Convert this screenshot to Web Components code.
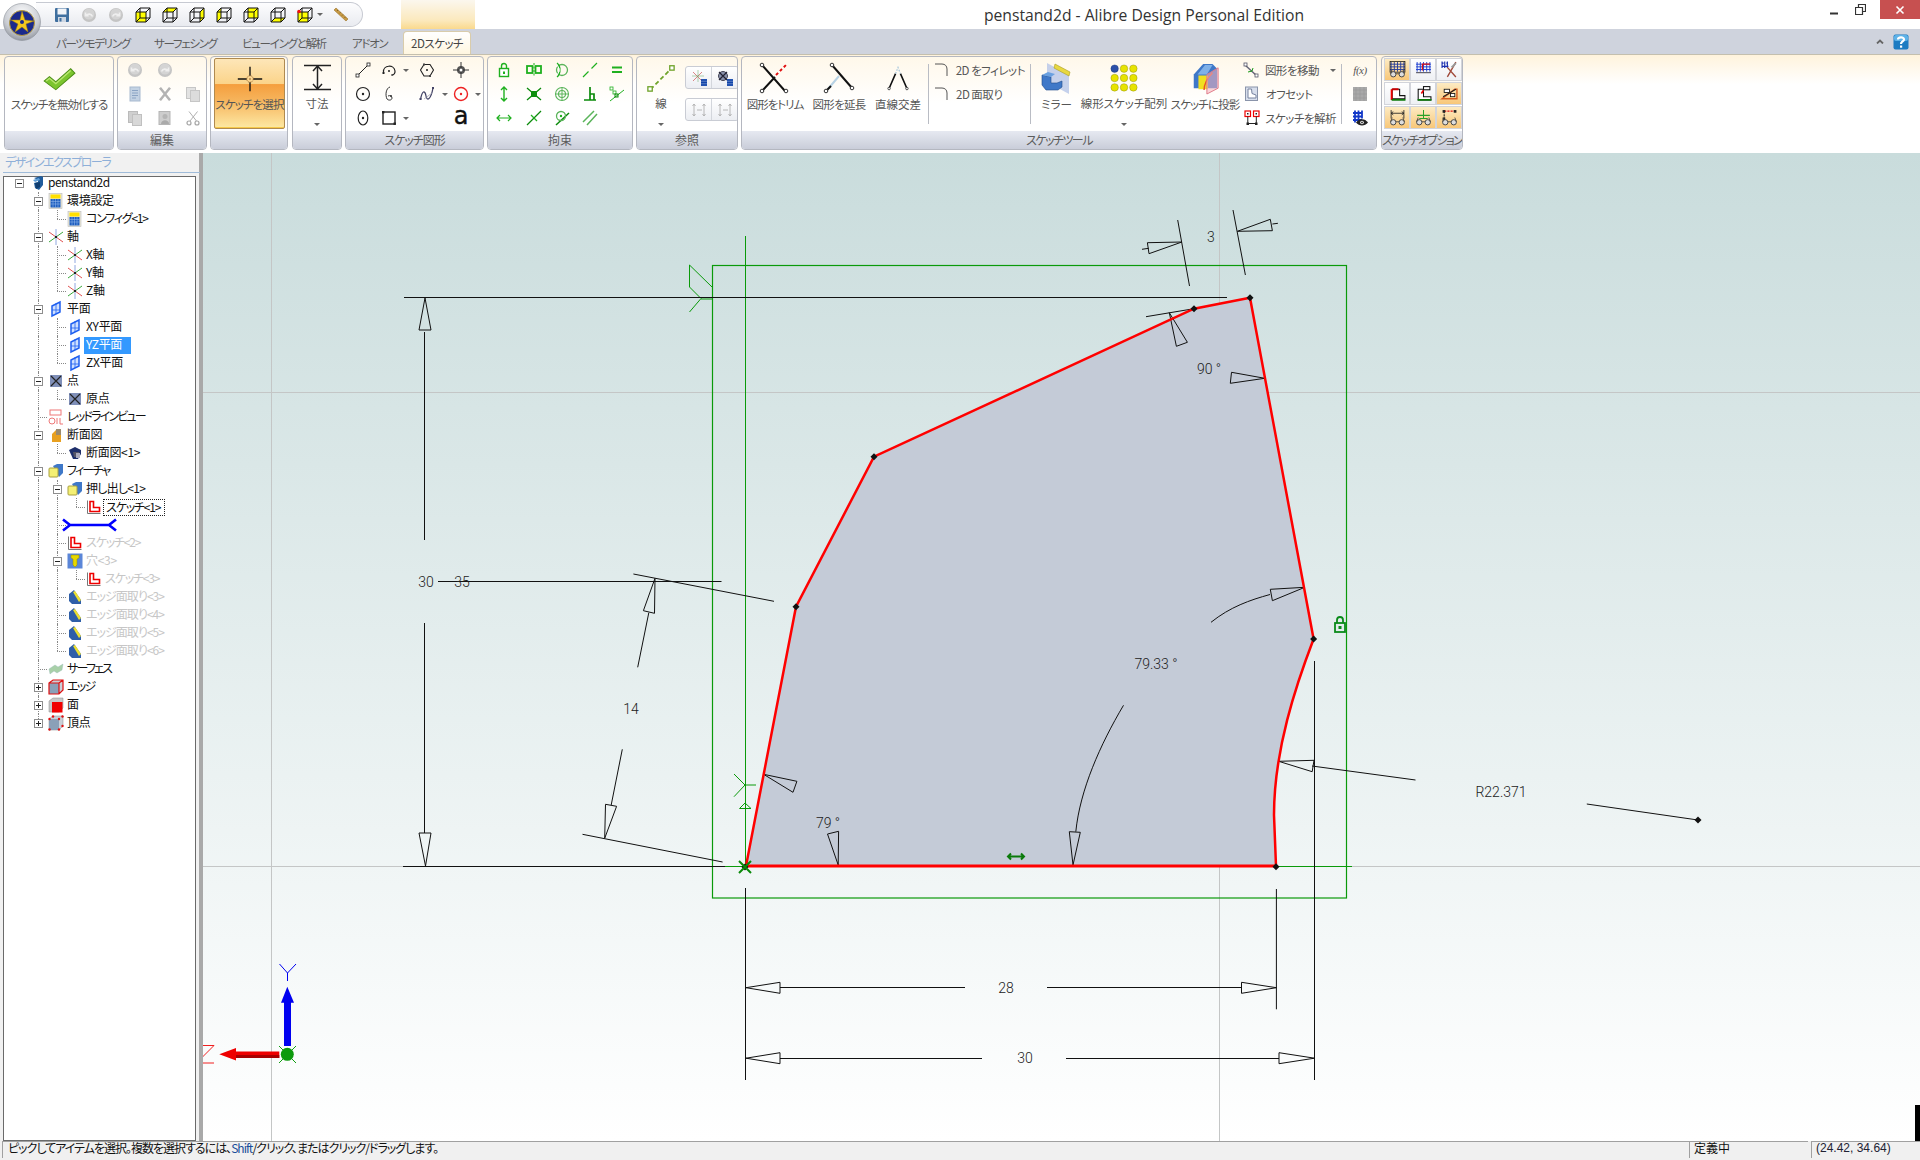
<!DOCTYPE html>
<html lang="ja"><head><meta charset="utf-8"><title>penstand2d</title>
<style>html,body{margin:0;padding:0;background:#fff;overflow:hidden}</style></head>
<body>
<cad-app></cad-app>
<script>
const FONT='"Noto Sans CJK JP","Noto Sans",sans-serif';
const g='#1fb01f', dg='#0a8a0a';
const disc=(d)=>`<circle cx="8" cy="8" r="7" fill="#c4c4c4"/><circle cx="8" cy="7" r="5.5" fill="#d4d4d4"/><path d="${d}" fill="none" stroke="#eee" stroke-width="1.6"/>`;
const cube=(f,dot)=>{const F={front:'M1 5h10v10H1z',top:'M1 5l4-4h10l-4 4z',right:'M11 5l4-4v10l-4 4z',back:'M5 1h10v10H5z',bottom:'M1 15l4-4h10l-4 4z',left:'M1 5l4-4v10l-4 4z'}[f];
 return `<path d="${F}" fill="#ffff00"/><path d="M1 5h10v10H1zM5 1h10v10H5zM1 5l4-4M11 5l4-4M1 15l4-4M11 15l4-4" fill="none" stroke="#111" stroke-width="1"/>${dot?'<circle cx="2" cy="4.500" r="1.800" fill="#e11"/>':''}`};
const sk=`<path d="M1.500 1.500v13h13" fill="none" stroke="#777" stroke-width="1"/><path d="M4 2.500h3.500v6h6v4H4z" fill="#fff" stroke="#e00" stroke-width="1.600"/>`;
const ICONS={
 save:`<rect x="1" y="1" width="14" height="14" rx="1" fill="#3f6f9f"/><rect x="3.500" y="1.500" width="9" height="6" fill="#f2f4f8"/><rect x="4" y="10" width="8" height="5" fill="#cdd6e2"/><rect x="5.500" y="11" width="2" height="3.500" fill="#3f6f9f"/>`,
 undo:disc('M11.500 9.500C10 6.500 7 6.500 4.800 8.500M4.500 5.500v3.300h3.200'),
 redo:disc('M4.500 9.500C6 6.500 9 6.500 11.200 8.500M11.500 5.500v3.300h-3.200'),
 c1:cube('front'),c2:cube('top'),c3:cube('right'),c4:cube('left'),c5:cube('back'),c6:cube('bottom'),c7:cube('front',1),
 ruler:`<path d="M1 3l2-2 12 11-2 2z" fill="#c79a45" stroke="#9b7226" stroke-width=".6"/><path d="M4 4l1-1M6.500 6.300l1-1M9 8.600l1-1M11.500 10.900l1-1" stroke="#6b4d15" stroke-width=".7"/>`,
 check:`<path d="M2 16l5-5 6 6L27 2l4 5-18 19z" fill="#7cc52e" stroke="#4d8f17" stroke-width="1"/><path d="M4 16l3-3 6 6L27 4" fill="none" stroke="#b9e66f" stroke-width="1.300"/>`,
 doc:`<rect x="3" y="1" width="10" height="14" fill="#c3d2e3" stroke="#a7b9cf"/><path d="M5 4.500h6M5 7h6M5 9.500h6M5 12h4" stroke="#8ba4c4"/>`,
 del:`<path d="M2 2.500l2-1.500 4 5 4-5 2 1.500-4.500 5.500 4.500 5.500-2 1.500-4-5-4 5-2-1.500 4.500-5.500z" fill="#b3b3b3"/>`,
 copy:`<rect x="1.500" y="1.500" width="9" height="11" fill="#e2e2e2" stroke="#c6c6c6"/><rect x="5.500" y="4.500" width="9" height="11" fill="#dcdcdc" stroke="#c6c6c6"/>`,
 copy2:`<rect x="1.500" y="1.500" width="9" height="11" fill="#cfcfcf" stroke="#bbb"/><rect x="5.500" y="4.500" width="9" height="11" fill="#d8d8d8" stroke="#c0c0c0"/>`,
 paste:`<rect x="2" y="1.500" width="11" height="13" fill="#cdcdcd" stroke="#b5b5b5"/><circle cx="8" cy="6.500" r="2.500" fill="#b5b5b5"/><path d="M4 14c0-5 8-5 8 0z" fill="#aaa"/>`,
 cut:`<path d="M12.500 1.500L5 11M4 1.500l7.500 9.500" stroke="#b0b0b0" fill="none"/><circle cx="4" cy="13" r="2" fill="none" stroke="#a5a5a5" stroke-width="1.200"/><circle cx="12" cy="13" r="2" fill="none" stroke="#a5a5a5" stroke-width="1.200"/>`,
 cross:`<path d="M16 1v11M16 20v11M1 16h11M20 16h11" stroke="#111" stroke-width="1.700" fill="none"/><circle cx="16" cy="16" r="4" fill="none" stroke="#8a5018" stroke-width="1" stroke-dasharray="1.500 1"/><circle cx="16" cy="16" r="1" fill="#8a5018"/>`,
 dim:`<path d="M1 1.500h27M1 25.500h27M14.500 2v23M10 7l4.500-5 4.500 5M10 20l4.500 5 4.500-5" fill="none" stroke="#222" stroke-width="1.500"/>`,
 line:`<path d="M3 13L13 3" stroke="#222"/><rect x="1" y="12" width="3" height="3" fill="#fff" stroke="#222" stroke-width=".8"/><rect x="12" y="1" width="3" height="3" fill="#fff" stroke="#222" stroke-width=".8"/>`,
 arc:`<path d="M2.500 10C2 3 13 2 14 9c.2 2-1 4-3 4" fill="none" stroke="#222" stroke-width="1.200"/><circle cx="8" cy="9" r="1" fill="#222"/><rect x="1.500" y="10" width="2" height="2" fill="#222"/><path d="M10 13h2" stroke="#222"/>`,
 poly:`<path d="M5 2.500h6l3.500 5.500L11 14H5L1.500 8z" fill="none" stroke="#222" stroke-width="1.100"/><circle cx="8" cy="8" r="1" fill="#222"/><rect x="4" y="1.500" width="2" height="2" fill="#444"/><rect x="10" y="13" width="2" height="2" fill="#444"/>`,
 point:`<circle cx="8" cy="8" r="4" fill="#555"/><path d="M8 0v16M0 8h16" stroke="#333"/><circle cx="8" cy="8" r="1.500" fill="#fff"/>`,
 circle:`<circle cx="8" cy="8" r="6.500" fill="none" stroke="#222" stroke-width="1.200"/><circle cx="8" cy="8" r="1.200" fill="#222"/>`,
 spiral:`<path d="M9 1C5 2 4 9 6 13c2 2 5 1 5-1s-2-3-4-2" fill="none" stroke="#333"/><circle cx="10" cy="10" r="1" fill="#333"/>`,
 spline:`<path d="M1.500 14C3 4 6 4 7 10s5 3 7-8" fill="none" stroke="#446" stroke-width="1.300"/><rect x="0.500" y="12" width="2" height="2" fill="#446"/><rect x="13" y="1" width="2" height="2" fill="#446"/><path d="M5 13l8-6" stroke="#99a" stroke-width=".7"/>`,
 rcircle:`<circle cx="8" cy="8" r="6.500" fill="none" stroke="#e22" stroke-width="1.400"/><circle cx="8" cy="8" r="1.200" fill="#e22"/>`,
 ellipse:`<ellipse cx="8" cy="8" rx="4.800" ry="7" fill="none" stroke="#222" stroke-width="1.200"/><circle cx="8" cy="8" r="1.200" fill="#222"/>`,
 rect:`<rect x="2" y="2" width="12" height="12" fill="none" stroke="#222" stroke-width="1.400"/><rect x="1" y="1" width="2.400" height="2.400" fill="#222"/><rect x="12.500" y="12.500" width="2.400" height="2.400" fill="#222"/>`,
 lock:`<rect x="3.500" y="6.500" width="9" height="8" fill="#fff" stroke="${g}" stroke-width="1.400"/><path d="M5.500 6.500V4a2.500 2.500 0 0 1 5 0v2.500" fill="none" stroke="${g}" stroke-width="1.400"/><rect x="7" y="9.500" width="2" height="2.500" fill="${g}"/>`,
 sym:`<rect x="1" y="4" width="5.500" height="7" fill="none" stroke="${g}" stroke-width="1.800"/><rect x="9.500" y="4" width="5.500" height="7" fill="none" stroke="${g}" stroke-width="1.800"/><path d="M8 1v13" stroke="${g}" stroke-dasharray="2 1.500"/>`,
 tan:`<circle cx="8" cy="8" r="5.500" fill="none" stroke="#5ab45a" stroke-width="1.300"/><path d="M3 1c4 3 4 11 0 14" fill="none" stroke="${g}" stroke-width="1.300"/><path d="M3 3l3 5-3 5" fill="none" stroke="#fff" stroke-width=".8"/>`,
 col:`<path d="M1 15l5.500-5.500M9.500 6.500L15 1" stroke="${g}" stroke-width="1.200"/>`,
 eq:`<path d="M3 5.500h10M3 10h10" stroke="${g}" stroke-width="2"/>`,
 vert:`<path d="M8 1v14M5 4l3-3 3 3M5 12l3 3 3-3" fill="none" stroke="${g}" stroke-width="1.400"/>`,
 midp:`<path d="M1 2l14 12M1 14L15 2" stroke="${dg}" stroke-width="1.300"/><rect x="5" y="5" width="6" height="6" fill="#0d8f0d"/>`,
 conc:`<circle cx="8" cy="8" r="6.500" fill="none" stroke="#5ab45a" stroke-width="1.100"/><circle cx="8" cy="8" r="3.500" fill="none" stroke="#5ab45a" stroke-width="1.100"/><path d="M1 8h14M8 1v14" stroke="#5ab45a" stroke-width="1"/>`,
 perp:`<path d="M2 14h12M8 1v13M8 8h4v6" fill="none" stroke="${dg}" stroke-width="1.700"/>`,
 ptl:`<path d="M1 15L15 4" stroke="${g}"/><rect x="1" y="1" width="3" height="3" fill="none" stroke="${g}" stroke-width=".8"/><rect x="4" y="5" width="3" height="3" fill="none" stroke="${g}" stroke-width=".8"/><rect x="6" y="8" width="3" height="3" fill="none" stroke="${dg}"/>`,
 horiz:`<path d="M1 8h14M4 5L1 8l3 3M12 5l3 3-3 3" fill="none" stroke="${g}" stroke-width="1.200"/>`,
 diag:`<path d="M1 15L15 1" stroke="${dg}" stroke-width="1.300"/><path d="M5 5l6 6" stroke="${g}" stroke-width="1.300"/>`,
 tang2:`<path d="M2 15L15 3" stroke="${dg}" stroke-width="1.500"/><circle cx="7" cy="6" r="4.500" fill="none" stroke="#5ab45a" stroke-width="1.300"/><circle cx="7" cy="6" r="1.200" fill="${g}"/>`,
 para:`<path d="M1 12L12 1M5 15L15 4" stroke="#5ab45a" stroke-width="1.500"/>`,
 refline:`<path d="M4 29L28 5" stroke="#6fa32a" stroke-width="2" stroke-dasharray="5 3"/><rect x="1" y="26" width="5" height="5" fill="#fff" stroke="#6fa32a" stroke-width="1.500"/><rect x="26" y="2" width="5" height="5" fill="#fff" stroke="#6fa32a" stroke-width="1.500"/>`,
 ref1:`<path d="M2 2l9 9M11 2L2 11" stroke="#c55" stroke-width=".7"/><path d="M7 0v12M1 6h12" stroke="#6a6" stroke-width=".5"/><path d="M10 10h6M10 12.500h6M10 15h6M11 9v7M13 9v7M15 9v7" stroke="#14a" stroke-width="1.300"/>`,
 ref2:`<circle cx="6" cy="6" r="4.500" fill="#8a93ad" stroke="#445"/><path d="M2 2l8 8M10 2l-8 8" stroke="#223" stroke-width="1.200"/><path d="M10 10h6M10 12.500h6M10 15h6M11 9v7M13 9v7M15 9v7" stroke="#14a" stroke-width="1.300"/>`,
 ref3:`<path d="M3 2v12M1.500 4L3 2l1.500 2M1.500 12L3 14l1.500-2M13 2v12M11.500 4L13 2l1.500 2M11.500 12L13 14l1.500-2M6 8h5" fill="none" stroke="#b0b0b0" stroke-width=".9"/>`,
 fillet:`<path d="M1 2h7c3 0 5 2 5 5v7" fill="none" stroke="#555" stroke-width="1"/>`,
 trim:`<path d="M3 3l23 26M3 29L16 15" stroke="#111" stroke-width="2"/><path d="M17 13l11-11" stroke="#e01010" stroke-width="2" stroke-dasharray="3 2.500"/><circle cx="3" cy="3" r="1.800" fill="#fff" stroke="#333"/><circle cx="3" cy="29" r="1.800" fill="#fff" stroke="#333"/><circle cx="27" cy="29" r="1.800" fill="#fff" stroke="#333"/>`,
 extend:`<path d="M9 3l20 23" stroke="#111" stroke-width="2"/><path d="M16 14L5 27" stroke="#b7d2e4" stroke-width="2"/><path d="M8 24l-4 4" stroke="#111" stroke-width="2"/><circle cx="9" cy="3" r="1.800" fill="#fff" stroke="#333"/><circle cx="29" cy="26" r="1.800" fill="#fff" stroke="#333"/><circle cx="3" cy="29" r="1.800" fill="#fff" stroke="#333"/>`,
 inter:`<path d="M13 11L5 28M19 11l8 17" stroke="#111" stroke-width="2"/><path d="M13 11l3-7 3 7" fill="none" stroke="#a9c7dc" stroke-width="1.500" stroke-dasharray="2 1.500"/><circle cx="5" cy="28" r="1.500" fill="#fff" stroke="#333"/><circle cx="27" cy="28" r="1.500" fill="#fff" stroke="#333"/>`,
 mirror:`<path d="M6 1l22 12v19L6 20z" fill="#b6c6e8" opacity=".8"/><path d="M14 2l15 8-1 4-15-8z" fill="#e8d840" stroke="#a99b20" stroke-width=".6"/><path d="M1 13l9 2v6h6l5-2v6l-4 3H5l-4-5z" fill="#3f78c8" stroke="#1f4a8a" stroke-width=".6"/><path d="M1 13l6-3 7 2-4 3z" fill="#6aa0e0"/>`,
 array:`<g stroke="#7a7a10" stroke-width=".4" fill="#e7e300"><circle cx="6" cy="6" r="4" fill="#2c4fa8" stroke="#143070"/><circle cx="16" cy="6" r="4"/><circle cx="26" cy="6" r="4"/><circle cx="6" cy="16" r="4"/><circle cx="16" cy="16" r="4"/><circle cx="26" cy="16" r="4"/><circle cx="6" cy="26" r="4"/><circle cx="16" cy="26" r="4"/><circle cx="26" cy="26" r="4"/></g>`,
 project:`<path d="M14 2h10l5 5v20H4V13z" fill="#3f78c8"/><path d="M8 13L16 3h8l-6 10z" fill="#7fb0e8"/><path d="M9 14h10v14H9z" fill="#f0e020"/><path d="M15 29c0-8 4-13 9-18" fill="none" stroke="#e9502a" stroke-width="1.500"/><path d="M18 13l12-7v21l-12 6z" fill="#f5b3bc" fill-opacity=".55" stroke="#e07a88"/>`,
 move:`<path d="M2 3l12 11" stroke="#667" stroke-width="1.500"/><rect x="1" y="1" width="3" height="3" fill="#fff" stroke="#556" stroke-width=".8"/><rect x="12" y="12" width="3" height="3" fill="#fff" stroke="#556" stroke-width=".8"/><path d="M5 10l4-1 1-3" fill="none" stroke="#1a9a1a"/>`,
 offset:`<rect x="1.500" y="1" width="12" height="13.500" fill="#d7deec" stroke="#8a94aa"/><path d="M4 3v9h8V9L8 7.500 7.500 3z" fill="#fff" stroke="#7884a0"/>`,
 analyze:`<rect x="1" y="1" width="5.500" height="5.500" fill="#fff" stroke="#e00" stroke-width="1.200"/><rect x="9.500" y="1" width="5.500" height="5.500" fill="#fff" stroke="#e00" stroke-width="1.200"/><rect x="3" y="3" width="1.500" height="1.500" fill="#222"/><rect x="11.500" y="3" width="1.500" height="1.500" fill="#222"/><path d="M3.800 6.500v7h8.500v-7" fill="none" stroke="#222"/><rect x="2.500" y="12.500" width="2.500" height="2.500" fill="#222"/><rect x="11" y="12.500" width="2.500" height="2.500" fill="#222"/>`,
 gsq:`<rect x="1" y="1" width="14" height="14" fill="#a9a9a9"/><path d="M1 4h14M1 8h14M1 12h14M4 1v14M8 1v14M12 1v14" stroke="#979797" stroke-width=".6"/>`,
 grideye:`<path d="M1 3h9M1 6.500h9M1 10h9M3 0.500v12M6.500 0.500v12M10 0.500v8" stroke="#1238c8" stroke-width="1.800"/><path d="M4 12.500c3-4.500 9-4.500 12 0-3 4-9 4-12 0z" fill="#222"/><circle cx="10" cy="12.500" r="1.800" fill="#fff"/><circle cx="10" cy="12.500" r=".9" fill="#222"/>`,
 glass:`<circle cx="4" cy="12.500" r="2.500" fill="#ddd" stroke="#444" stroke-width=".9"/><circle cx="12" cy="12.500" r="2.500" fill="#ddd" stroke="#444" stroke-width=".9"/><path d="M6.500 12h3M1.500 12L3 8M14.500 12L13 8" stroke="#444" stroke-width=".8" fill="none"/>`,
};
const gl=ICONS.glass;
const gridlines=(c)=>`<path d="M2 1v9M5 1v9M8 1v9M11 1v9M14 1v9M1 3h14M1 5.500h14M1 8h14" stroke="${c}" stroke-width=".9" fill="none"/>`;
Object.assign(ICONS,{
 o1:gridlines('#2a3f9a')+'<rect x="1" y="0.500" width="14" height="10" fill="none" stroke="#111" stroke-width=".7"/>'+gl,
 o2:gridlines('#2040d0')+'<path d="M7 9L7 3h7" stroke="#e01010" stroke-width="1.200" fill="none"/><path d="M1 11h14" stroke="#223" stroke-width=".8"/>',
 o3:'<path d="M1 2h1.500M5 2h1.500M1 5h6M1 0.500v6M3.500 0.500v6M6 0.500v6" stroke="#1c2fb0" stroke-width="1.100"/><path d="M6 6l8 9M14 1l-8 14" stroke="#a04a3a" stroke-width="1.300"/><path d="M10 6l4-4" stroke="#999" stroke-width="1.800"/>',
 o4:'<path d="M3 4h7v6h5v3H3z" fill="#fff" stroke="#111"/><path d="M2.500 4v10" stroke="#e00" stroke-width="1.800"/><path d="M2.500 14h13" stroke="#0a7a0a" stroke-width="1.800"/><path d="M3 4h6" stroke="#c00" stroke-width="1.800"/>',
 o5:'<path d="M3 4h5v7h7v3H3z" fill="#fff" stroke="#111"/><rect x="8" y="1.500" width="6" height="3" fill="#fff" stroke="#111"/><path d="M8 5l-2 3" stroke="#e00" stroke-width="1.500"/><path d="M2.500 14h13" stroke="#0a7a0a" stroke-width="1.500"/>',
 o6:'<path d="M1 13l12-9 2 0v9z" fill="none" stroke="#d2591e" stroke-width="1.300"/><rect x="3" y="4" width="5" height="3" fill="#fff" stroke="#111" stroke-width=".8"/><rect x="9" y="8" width="4" height="3" fill="#fff" stroke="#111" stroke-width=".8"/><path d="M2 11l12-7" stroke="#222"/>',
 o7:'<path d="M2 1v8M14 1v8M2 4h12M4 2.500L2 4l2 1.500M12 2.500L14 4l-2 1.500" stroke="#222" stroke-width=".8" fill="none"/>'+gl,
 o8:'<path d="M8 1v8M2 6h12" stroke="#2aa12a" stroke-width="1"/><path d="M4 9h8" stroke="#2aa12a" stroke-width="1"/>'+gl,
 o9:'<path d="M3 2h10" stroke="#e01010" stroke-dasharray="2 1"/><path d="M3 2v7" stroke="#222" stroke-dasharray="2 1"/><rect x="1.500" y="1" width="2.500" height="2.500" fill="#222"/><rect x="12" y="1" width="2.500" height="2.500" fill="#222"/><rect x="1.500" y="8" width="2.500" height="2.500" fill="#222"/>'+gl,
 tpen:'<path d="M5 3l7-2 2 1v8l-4 5-4-2-1-5 4-1V5z" fill="#1f5c9c"/><path d="M4 5l6-2 1 2-5 2z" fill="#60a0d8"/><path d="M6 8l5-1v5l-4 2z" fill="#0f3d70"/>',
 tcalc:'<rect x="1" y="0.500" width="13" height="15" fill="#ece9d8" stroke="#bbb" stroke-width=".6"/><rect x="2.500" y="1.500" width="10" height="4" fill="#ffe000"/><rect x="2.500" y="6" width="10" height="8.500" fill="#1f5fc0"/><path d="M5 6v8.500M7.500 6v8.500M10 6v8.500M2.500 8.500h10M2.500 11h10" stroke="#9fc0f0" stroke-width=".5"/>',
 taxes:'<path d="M1 3l14 10" stroke="#e05050"/><path d="M1 13L15 3" stroke="#3aa83a"/><path d="M8 0v16" stroke="#90a8e0"/><rect x="7" y="7" width="2" height="2" fill="#222"/>',
 tplane:'<path d="M4 5l8-4v10l-8 4z" fill="#cfe0ff" stroke="#2060f0" stroke-width="1.500"/><path d="M8 2v11M4 9h8" stroke="#2060f0" stroke-width=".8"/>',
 tpoint:'<rect x="2" y="2" width="12" height="12" fill="#7f8fb8"/><path d="M3 3l10 10M13 3L3 13" stroke="#222" stroke-width="1.200"/>',
 tred:'<rect x="2" y="1" width="11" height="5" fill="#fff" stroke="#e77"/><rect x="1" y="9" width="6" height="6" rx="3" fill="#fff" stroke="#e77"/><path d="M9 9v6M12 9v6h3" fill="none" stroke="#e77"/>',
 tsec:'<path d="M4 7l5-5h4v12H4z" fill="#e8a020"/><path d="M8 2h5v6H8z" fill="#9a8a70"/><path d="M4 10h9v5H4z" fill="#e8a020"/>',
 tsec2:'<path d="M2 5l6-3 6 3v4l-3 5H6z" fill="#1e2f6a"/><path d="M6 7h6l1 5H7z" fill="#556"/><rect x="9" y="8" width="4" height="5" fill="#aab"/>',
 tfeat:'<path d="M5 3l4-2h6v9l-4 4z" fill="#3f78c8"/><rect x="1" y="5" width="9" height="9" rx="1" fill="#f4f074" stroke="#a9a040"/>',
 sk,
 thole:'<rect x="0.500" y="0.500" width="15" height="15" fill="#5b86d8"/><path d="M4 2h8v3l-2 1v6l-2 2-2-2V6L4 5z" fill="#e8d800" stroke="#9a8f00" stroke-width=".5"/>',
 tcham:'<path d="M2 5l5-4 7 10v4H5L2 12z" fill="#2f5fa8"/><path d="M6 3l2-1 6 9-2 2z" fill="#ece030"/>',
 tsurf:'<path d="M1 8l6-4 3 2 5-3-1 6-5 3-3-2-4 3z" fill="#a8d0a8" stroke="#9bb" stroke-width=".4"/>',
 tedge:'<path d="M1 4l4-3h10v10l-4 4H1z" fill="#c9d0d8"/><rect x="1" y="4" width="10" height="11" fill="#8aa0b8"/><path d="M1 4l4-3h10v10l-4 4H1zM1 4h10v11M11 4l4-3" fill="none" stroke="#e01010" stroke-width="1.200"/>',
 tface:'<path d="M1 4l4-3h10v10l-4 4H1z" fill="#c8c8c8" stroke="#888" stroke-width=".5"/><rect x="4" y="5" width="10.500" height="10.500" fill="#f00000"/>',
 tvert:'<path d="M1 4l4-3h10v10l-4 4H1z" fill="#c9d0d8" stroke="#888" stroke-width=".5"/><rect x="1" y="4" width="10" height="11" fill="#8aa0b8"/><g fill="#e01010"><circle cx="1.500" cy="4" r="1.200"/><circle cx="5" cy="1.500" r="1.200"/><circle cx="14.500" cy="1.500" r="1.200"/><circle cx="14.500" cy="11" r="1.200"/><circle cx="11" cy="14.500" r="1.200"/><circle cx="1.500" cy="14.500" r="1.200"/><circle cx="11" cy="4" r="1.200"/></g>',
 help:'<rect x="0.500" y="0.500" width="15" height="15" rx="2" fill="#1c7bc2"/><rect x="1" y="1" width="14" height="6" rx="2" fill="#5db2e8"/><path d="M5 5.500C5 3 11 2.500 11 5.500c0 2-3 2-3 4.500" fill="none" stroke="#fff" stroke-width="2.200"/><rect x="7" y="11.500" width="2.200" height="2.200" fill="#fff"/>',
});
const hasKana=s=>/[\u3040-\u30FF]/.test(s);
class RIcon extends HTMLElement{
 constructor(){super();const s=this.attachShadow({mode:'open'});
  const n=this.getAttribute('name'),w=+this.getAttribute('w')||16,h=+this.getAttribute('h')||w,v=this.getAttribute('v')||'0 0 16 16';
  s.innerHTML=`<style>:host{display:flex;align-items:center;justify-content:center;min-width:0}svg{display:block;overflow:visible}</style><svg xmlns="http://www.w3.org/2000/svg" width="${w}" height="${h}" viewBox="${v}" preserveAspectRatio="none">${ICONS[n]||''}</svg>`;}
}
customElements.define('r-icon',RIcon);
class RCaret extends HTMLElement{constructor(){super();this.attachShadow({mode:'open'}).innerHTML=`<style>:host{display:flex;align-items:center;justify-content:center}i{display:block;width:0;height:0;border:3px solid transparent;border-top:3px solid #666;border-bottom:0}</style><i></i>`}}
customElements.define('r-caret',RCaret);

class AppOrb extends HTMLElement{constructor(){super();this.attachShadow({mode:'open'}).innerHTML=`<style>:host{position:absolute;left:3px;top:3px;width:38px;height:38px;z-index:3}svg{display:block}</style>
<svg width="38" height="38" viewBox="0 0 38 38"><defs><radialGradient id="a" cx=".5" cy=".3" r=".8"><stop offset="0" stop-color="#fff"/><stop offset=".6" stop-color="#c9ccd2"/><stop offset="1" stop-color="#7d828c"/></radialGradient></defs><circle cx="19" cy="19" r="18.500" fill="url(#a)" stroke="#8c9098" stroke-width=".6"/><circle cx="19" cy="20" r="12.500" fill="#1b2a8c" stroke="#b79b3c" stroke-width="1"/><path d="M19 8l3 9 9 1-8 3 2 8-6-5-7 5 3-8-7-4 9 0z" fill="#f3c81e" stroke="#9b7b10" stroke-width=".5"/><circle cx="19" cy="19" r="2" fill="#1b2a8c"/></svg>`}}
customElements.define('app-orb',AppOrb);

class QuickBar extends HTMLElement{constructor(){super();const items=['save','undo','redo','c1','c2','c3','c4','c5','c6','c7'];
 this.attachShadow({mode:'open'}).innerHTML=`<style>:host{display:flex;align-items:center;box-sizing:border-box;width:327px;height:25px;margin:2px 0 0 36px;padding-left:18px;border:1px solid #c7cad2;border-left:0;border-radius:0 13px 13px 0;background:linear-gradient(#fdfdfe,#e9ebf0);position:relative}
 div{display:flex;gap:11px;align-items:center}r-caret{margin-left:4px}.sp{margin-left:10px}</style><div>${items.map(i=>`<r-icon name="${i}"></r-icon>`).join('')}</div><r-caret></r-caret><r-icon class="sp" name="ruler"></r-icon>`}}
customElements.define('quick-bar',QuickBar);

class TitleBar extends HTMLElement{constructor(){super();this.attachShadow({mode:'open'}).innerHTML=`<style>:host{display:flex;height:29px;background:#fff;position:relative}
 .glow{width:74px;margin-left:38px;height:29px;background:linear-gradient(#fbf7ee,#fbe9bd 70%,#fad98d)}
 .t{flex:1;text-align:center;font:15.700px/30px "Open Sans","Noto Sans",sans-serif;color:#333;white-space:nowrap}
 .w{display:flex;width:107px;align-items:flex-start}.b{width:26px;height:19px;display:flex;align-items:center;justify-content:center}
 .x{width:40px;height:19px;background:#c75050;display:flex;align-items:center;justify-content:center;margin-left:7px}</style>
 <quick-bar></quick-bar><div class="glow"></div><div class="t">penstand2d - Alibre Design Personal Edition</div>
 <div class="w"><div class="b" style="margin-left:8px"><svg width="10" height="10"><path d="M1 8.500h8" stroke="#333" stroke-width="2"/></svg></div><div class="b"><svg width="11" height="11"><path d="M.500 3.500h7v7h-7zM3.500 3V.5h7v7H8" fill="none" stroke="#333" stroke-width="1.200"/></svg></div><div class="x"><svg width="10" height="10"><path d="M1.500 1.500l7 7M8.500 1.500l-7 7" stroke="#fff" stroke-width="1.600"/></svg></div></div>`}}
customElements.define('title-bar',TitleBar);

class RibbonTabs extends HTMLElement{constructor(){super();this.attachShadow({mode:'open'}).innerHTML=`<style>:host{display:flex;height:25px;background:#cfd3dd;font:11.500px/24px ${FONT};font-feature-settings:"palt";letter-spacing:-1.300px;color:#5a5a5a;align-items:flex-end;position:relative}
 span{display:block;white-space:nowrap;height:22px;line-height:22px}
 .a{box-sizing:border-box;width:68px;text-align:center;border:1px solid #d9ccab;border-bottom:0;border-radius:4px 4px 0 0;background:linear-gradient(#fff,#fff6e0);height:23px;color:#444;letter-spacing:-.5px}
 .r{margin-left:auto;display:flex;align-items:center;height:25px;gap:9px;padding-right:11px}
 .up{width:8px;height:5px}</style>
 <span style="margin-left:56px;width:98px">パーツモデリング</span><span style="width:88px">サーフェシング</span><span style="width:110px">ビューイングと解析</span><span style="width:51px">アドオン</span><span class="a">2Dスケッチ</span>
 <div class="r"><svg class="up" viewBox="0 0 8 5"><path d="M1 4.500l3-3 3 3" fill="none" stroke="#666" stroke-width="1.800"/></svg><r-icon name="help"></r-icon></div>`}}
customElements.define('ribbon-tabs',RibbonTabs);

class RPanel extends HTMLElement{constructor(){super();const l=this.getAttribute('label')||'',w=this.getAttribute('w'),c=this.getAttribute('cols');
 const grid=c?`display:grid;grid-template-columns:${c};grid-auto-rows:24px;align-items:center;justify-items:center;`:'display:flex;';
 this.attachShadow({mode:'open'}).innerHTML=`<style>:host{display:flex;flex-direction:column;box-sizing:border-box;width:${w}px;height:94px;border:1px solid #b4b7c0;border-radius:4px;background:linear-gradient(#fff8ea,#fff 50%);overflow:hidden;flex:none}
 .b{height:74px;box-sizing:border-box;padding:1px 0 0 ${this.getAttribute('pl')||0}px;${grid}}
 .l{height:18px;background:linear-gradient(#e6e9f1,#c9cdd9);text-align:center;font:12px/18px ${FONT};font-feature-settings:"palt";color:#5c5c5c;white-space:nowrap;letter-spacing:${hasKana(l)?(this.getAttribute('ls')||'-1.200'):'0'}px}</style><div class="b"><slot></slot></div><div class="l">${l}</div>`}}
customElements.define('r-panel',RPanel);

class RBig extends HTMLElement{constructor(){super();const w=this.getAttribute('w')||60,a=this.hasAttribute('active'),cr=this.hasAttribute('caret');
 this.attachShadow({mode:'open'}).innerHTML=`<style>:host{display:flex;flex-direction:column;align-items:center;box-sizing:border-box;width:${w}px;height:${a?71:72}px;flex:none;font:11.500px/14px ${FONT};font-feature-settings:"palt";color:#555;white-space:nowrap;letter-spacing:${this.getAttribute('ls')||0}px;${a?'border:1px solid #b08a50;border-radius:2px;background:linear-gradient(#fde6b8,#fbd48a 36%,#f59f3e 37%,#f6b45c 60%,#fde9a4);box-shadow:inset 0 -1px 0 #f6c94a;':''}}
 .i{height:${a?39:40}px;display:flex;align-items:center;justify-content:center}.t{height:14px;margin-top:-1px}r-caret{height:12px;margin-top:8px}</style>
 <div class="i"><slot></slot></div><div class="t">${this.getAttribute('label')||''}</div>${cr?'<r-caret></r-caret>':''}`}}
customElements.define('r-big',RBig);

class RSmall extends HTMLElement{constructor(){super();this.attachShadow({mode:'open'}).innerHTML=`<style>:host{display:flex;align-items:center;height:24px;gap:6px;font:11.500px/14px ${FONT};font-feature-settings:"palt";letter-spacing:-.5px;color:#555;white-space:nowrap}r-caret{margin-left:5px}</style><slot></slot><span>${this.getAttribute('label')}</span>${this.hasAttribute('caret')?'<r-caret></r-caret>':''}`}}
customElements.define('r-small',RSmall);

class RStack extends HTMLElement{constructor(){super();this.attachShadow({mode:'open'}).innerHTML=`<style>:host{display:flex;flex-direction:column;flex:none}</style><slot></slot>`}}
customElements.define('r-stack',RStack);
class RSep extends HTMLElement{constructor(){super();this.attachShadow({mode:'open'}).innerHTML=`<style>:host{display:block;width:1px;height:60px;margin-top:6px;background:#b9bcc4;flex:none}</style>`}}
customElements.define('r-sep',RSep);
class RGroup extends HTMLElement{constructor(){super();this.attachShadow({mode:'open'}).innerHTML=`<style>:host{display:grid;grid-template-columns:26px 26px;height:23px;box-sizing:border-box;border:1px solid #c9ccd4;border-radius:3px;background:linear-gradient(#fff,#eceef3);align-items:center;justify-items:center}::slotted(:first-child){border-right:1px solid #d3d6dc;width:25px;height:21px}</style><slot></slot>`}}
customElements.define('r-group',RGroup);
class RToggle extends HTMLElement{constructor(){super();const a=this.hasAttribute('on');this.attachShadow({mode:'open'}).innerHTML=`<style>:host{display:flex;align-items:center;justify-content:center;width:26px;height:23px;box-sizing:border-box;border:1px solid #d2d4da;background:${a?'linear-gradient(#fdebc3,#f8c778)':'linear-gradient(#fff,#eef0f4)'}}</style><r-icon name="${this.getAttribute('name')}" w="17" h="17"></r-icon>`}}
customElements.define('r-toggle',RToggle);
class RToggles extends HTMLElement{constructor(){super();this.attachShadow({mode:'open'}).innerHTML=`<style>:host{display:grid;grid-template-columns:repeat(3,26px);grid-auto-rows:23px;row-gap:1px}</style><slot></slot>`}}
customElements.define('r-toggles',RToggles);

class RibbonBar extends HTMLElement{constructor(){super();
 const ic=(n,w)=>`<r-icon name="${n}"${w?` w="${w}"`:''}></r-icon>`;
 this.attachShadow({mode:'open'}).innerHTML=`<style>:host{display:flex;gap:3px;box-sizing:border-box;height:99px;padding:1px 0 0 4px;background:linear-gradient(#fff3dc,#fff 30%);border-top:1px solid #c4bfae}</style>
 <r-panel w="110"><r-big w="108" ls="-1" label="スケッチを無効化する"><r-icon name="check" v="0 0 32 32" w="34" h="28" style="margin-top:5px"></r-icon></r-big></r-panel>
 <r-panel w="90" label="編集" cols="33px 28px 28px">
  ${ic('undo')}${ic('redo')}<span></span>
  ${ic('doc')}${ic('del')}${ic('copy')}
  ${ic('copy2')}${ic('paste')}${ic('cut')}
 </r-panel>
 <r-panel w="78" pl="3"><r-big w="71" active ls="-.85" label="スケッチを選択"><r-icon name="cross" v="0 0 32 32" w="26" h="26"></r-icon></r-big></r-panel>
 <r-panel w="50" style="margin-left:1px"><r-big w="48" caret label="寸法"><r-icon name="dim" v="0 0 29 27" w="29" h="27"></r-icon></r-big></r-panel>
 <r-panel w="139" label="スケッチ図形" ls="-1" cols="33px 20px 14px 28px 10px 20px 14px">
  ${ic('line')}${ic('arc')}<r-caret></r-caret>${ic('poly')}<span></span>${ic('point')}<span></span>
  ${ic('circle')}${ic('spiral')}<span></span><span style="grid-column:4/5"><r-icon name="spline"></r-icon></span><r-caret style="margin-left:-2px"></r-caret>${ic('rcircle')}<r-caret></r-caret>
  ${ic('ellipse')}${ic('rect')}<r-caret></r-caret><span></span><span></span><span style="font:400 24px/24px 'DejaVu Sans',sans-serif;color:#111;margin-top:-4px;-webkit-text-stroke:.4px #111">a</span><span></span>
 </r-panel>
 <r-panel w="146" label="拘束" cols="1px 30px 29px 28px 28px 26px">
  <span></span>${ic('lock')}${ic('sym')}${ic('tan')}${ic('col')}${ic('eq')}
  <span></span>${ic('vert')}${ic('midp')}${ic('conc')}${ic('perp')}${ic('ptl')}
  <span></span>${ic('horiz')}${ic('diag')}${ic('tang2')}${ic('para')}<span></span>
 </r-panel>
 <r-panel w="102" label="参照"><r-big w="48" caret label="線"><r-icon name="refline" v="0 0 32 32" w="28" h="28"></r-icon></r-big>
  <r-stack style="padding-top:8px;gap:9px"><r-group>${ic('ref1')}${ic('ref2')}</r-group><r-group>${ic('ref3')}${ic('ref3')}</r-group></r-stack></r-panel>
 <r-panel w="636" label="スケッチツール" ls="-1.500" pl="3">
  <r-big w="60" ls="-1" label="図形をトリム"><r-icon name="trim" v="0 0 32 32" w="32" h="32"></r-icon></r-big>
  <r-big w="56" ls="-.7" style="margin-left:6px" label="図形を延長"><r-icon name="extend" v="0 0 32 32" w="32" h="32"></r-icon></r-big>
  <r-big w="48" style="margin-left:7px" label="直線交差"><r-icon name="inter" v="0 0 32 32" w="26" h="28"></r-icon></r-big>
  <r-sep style="margin-left:6px"></r-sep>
  <r-stack style="margin-left:5px;width:91px"><r-small label="2D をフィレット">${ic('fillet')}</r-small><r-small label="2D 面取り">${ic('fillet')}</r-small></r-stack>
  <r-sep style="margin-left:5px"></r-sep>
  <r-big w="37" style="margin-left:7px" label="ミラー"><r-icon name="mirror" v="0 0 32 32" w="32" h="32"></r-icon></r-big>
  <r-big w="82" style="margin-left:8px" caret label="線形スケッチ配列"><r-icon name="array" v="0 0 32 32" w="30" h="30"></r-icon></r-big>
  <r-big w="68" ls="-.85" style="margin-left:6px" label="スケッチに投影"><r-icon name="project" v="0 0 32 33" w="30" h="32"></r-icon></r-big>
  <r-stack style="margin-left:5px;width:92px"><r-small caret label="図形を移動">${ic('move')}</r-small><r-small label="オフセット">${ic('offset')}</r-small><r-small label="スケッチを解析">${ic('analyze')}</r-small></r-stack>
  <r-sep style="margin-left:5px"></r-sep>
  <r-stack style="margin-left:6px;width:24px;align-items:center"><r-small label="" style="font:italic 11px 'Liberation Serif',serif;color:#555;gap:0"><span>f(x)</span></r-small><r-small label="" style="gap:0">${ic('gsq')}</r-small><r-small label="" style="gap:0">${ic('grideye')}</r-small></r-stack>
 </r-panel>
 <r-panel w="82" style="margin-left:1px" label="スケッチオプション" ls="-1.700" pl="2"><r-toggles>
  <r-toggle on name="o1"></r-toggle><r-toggle name="o2"></r-toggle><r-toggle name="o3"></r-toggle>
  <r-toggle name="o4"></r-toggle><r-toggle name="o5"></r-toggle><r-toggle on name="o6"></r-toggle>
  <r-toggle on name="o7"></r-toggle><r-toggle on name="o8"></r-toggle><r-toggle on name="o9"></r-toggle>
 </r-toggles></r-panel>`}}
customElements.define('ribbon-bar',RibbonBar);

class TreeRow extends HTMLElement{constructor(){super();
 const L=+this.getAttribute('l')||0,ex=this.getAttribute('x'),ic=this.getAttribute('i'),t=this.getAttribute('t')||'',gs=(this.getAttribute('g')||'').split(',').filter(Boolean),w=this.getAttribute('lw');
 const dim=this.hasAttribute('dim'),sel=this.hasAttribute('sel'),foc=this.hasAttribute('foc');
 const plain=t.replace(/&[lg]t;/g,'<');
 const kanaN=(plain.match(/[\u3040-\u30FF]/g)||[]).length,k=plain?kanaN/plain.length:0;
 const ls=/^[a-z0-9]+$/.test(plain)?-.5:(-1.500*k-.3);
 const dots=(css)=>`<i style="${css}"></i>`;
 let guides=gs.map(s=>{const half=s.endsWith('h');const x=parseInt(s);return dots(`left:${x}px;top:0;height:${half?9:18}px;border-left:1px dotted #888`)}).join('');
 const col=19+19*L;
 guides+=dots(`left:${col}px;top:9px;width:${ex?0:9}px;border-top:1px dotted #888`);
 const box=ex?`<b>${ex==='-'?'<u></u>':'<u></u><s></s>'}</b>`:'<em></em>';
 this.attachShadow({mode:'open'}).innerHTML=`<style>:host{display:block;height:18px;position:relative;font:12px/18px ${FONT};font-feature-settings:"palt";color:${dim?'#c6c6c6':'#111'};white-space:nowrap}
 .r{display:flex;align-items:center;height:18px;padding-left:${15+19*L}px;position:relative}
 i{position:absolute;display:block}
 b{display:block;box-sizing:border-box;width:9px;height:9px;border:1px solid #8e8e8e;background:#fff;position:relative;flex:none}
 u{position:absolute;left:1px;right:1px;top:3px;height:1px;background:#222}s{position:absolute;top:1px;bottom:1px;left:3px;width:1px;background:#222}
 em{display:block;width:9px;flex:none}
 r-icon{width:16px;margin-left:5px;flex:none;position:relative;${dim&&ic!=='sk'&&ic!=='tcham'&&ic!=='thole'?'opacity:.5;':''}}
 .t{margin-left:${ic?1:0}px;padding:0 2px;height:${sel||foc?17:18}px;line-height:${sel||foc?14:16}px;box-sizing:border-box;letter-spacing:${ls}px;${w?`width:${w}px;`:''}${sel?'background:#3399ff;color:#fff;':''}${foc?'border:1px dotted #222;':''}}
 .bar{margin-left:-2px}</style>${guides}<div class="r">${box}${ic?`<r-icon name="${ic}"></r-icon>`:''}${t?`<span class="t">${t}</span>`:''}${this.hasAttribute('bar')?`<svg class="bar" width="60" height="18"><path d="M3 3.500l7 5.500-7 5.500M56 3.500l-7 5.500 7 5.500M8 9h43" fill="none" stroke="#0000ff" stroke-width="2.600"/></svg>`:''}</div>`}}
customElements.define('tree-row',TreeRow);

class TreeView extends HTMLElement{constructor(){super();
 const R=[[0,'-','tpen','penstand2d',''],[1,'-','tcalc','環境設定','38'],[2,'','tcalc','コンフィグ<1>','38,57h'],[1,'-','taxes','軸','38'],[2,'','taxes','X軸','38,57'],[2,'','taxes','Y軸','38,57'],[2,'','taxes','Z軸','38,57h'],[1,'-','tplane','平面','38'],[2,'','tplane','XY平面','38,57'],[2,'','tplane','YZ平面','38,57','sel'],[2,'','tplane','ZX平面','38,57h'],[1,'-','tpoint','点','38'],[2,'','tpoint','原点','38,57h'],[1,'','tred','レッドラインビュー','38'],[1,'-','tsec','断面図','38'],[2,'','tsec2','断面図<1>','38,57h'],[1,'-','tfeat','フィーチャ','38'],[2,'-','tfeat','押し出し<1>','38,57'],[3,'','sk','スケッチ<1>','38,57,76h','foc'],[2,'','','','38,57','bar'],[2,'','sk','スケッチ<2>','38,57','dim'],[2,'-','thole','穴<3>','38,57','dim'],[3,'','sk','スケッチ<3>','38,57,76h','dim'],[2,'','tcham','エッジ面取り<3>','38,57','dim'],[2,'','tcham','エッジ面取り<4>','38,57','dim'],[2,'','tcham','エッジ面取り<5>','38,57','dim'],[2,'','tcham','エッジ面取り<6>','38,57h','dim'],[1,'','tsurf','サーフェス','38'],[1,'+','tedge','エッジ','38'],[1,'+','tface','面','38'],[1,'+','tvert','頂点','38h']];
 const esc=s=>s.replace(/</g,'&lt;').replace(/>/g,'&gt;');
 this.attachShadow({mode:'open'}).innerHTML=`<style>:host{display:block;box-sizing:border-box;width:193px;flex:1;margin:3px 0 0 3px;background:#fff;border:1px solid #6a6a6a}
 div{margin-top:-3px;margin-left:-4px}</style><div>${R.map(r=>{const ex=r[5]==='sel'?' lw="47"':r[5]==='foc'?' lw="62"':'';return `<tree-row l="${r[0]}" ${r[1]?`x="${r[1]}"`:''} ${r[2]?`i="${r[2]}"`:''} t="${esc(r[3])}" g="${r[4]}" ${r[5]||''}${ex}></tree-row>`}).join('')}</div>`}}
customElements.define('tree-view',TreeView);

class SideBar extends HTMLElement{constructor(){super();this.attachShadow({mode:'open'}).innerHTML=`<style>:host{display:flex;flex-direction:column;flex:none;box-sizing:border-box;width:203px;background:#f1f1f1;border-right:4px solid #a9a9a9}
 .h{height:20px;box-sizing:border-box;border-bottom:1px solid #9fbbd9;margin-left:3px;margin-right:-1px;font:12px/18px ${FONT};font-feature-settings:"palt";letter-spacing:-1.500px;color:#8eafd8;padding-left:2px;white-space:nowrap}</style>
 <div class="h">デザインエクスプローラ</div><tree-view></tree-view>`}}
customElements.define('side-bar',SideBar);

class CadCanvas extends HTMLElement{constructor(){super();
 const ln=(a,b,c,d,e='')=>`<path d="M${a} ${b}L${c} ${d}" ${e}/>`;
 const tri=(p)=>`<polygon points="${p}" fill="none" stroke="#111" stroke-width="1"/>`;
 const dot=(x,y)=>`<path d="M${x} ${y-3.500}l3.500 3.500-3.500 3.500-3.500-3.500z" fill="#111" stroke="none"/>`;
 const tx=(x,y,t)=>`<text x="${x}" y="${y}" text-anchor="middle" dominant-baseline="central">${t}</text>`;
 this.attachShadow({mode:'open'}).innerHTML=`<style>:host{display:block;flex:1;min-width:0;position:relative;overflow:hidden;background:linear-gradient(#c9dcdc,#ffffff)}svg{display:block}
 text{font:300 14px Roboto,"Liberation Sans",sans-serif;fill:#222}.blk{position:absolute;right:0;bottom:-6px;width:5px;height:42px;background:#000}</style>
 <svg xmlns="http://www.w3.org/2000/svg" width="1717" height="988" viewBox="203 153 1717 988">
 <g stroke="#c4c6c6" fill="none"><path d="M271.500 153v988M1219.500 153v988M203 392.500h1717M203 866.500h1717"/></g>
 <path d="M746 866 L796 606.700 L874 456.700 L1194 308.700 L1250 297.700 L1313.600 639 C1296 685 1274 750 1274 815 L1276 866 Z" fill="#c4cbd7"/>
 <g stroke="#0a9a0a" fill="none"><rect x="712.500" y="265.500" width="634" height="632.500" stroke-width="1.200"/><path d="M745.500 236V866"/><path d="M1276 866.500h76M725 866.500h20"/>
 <path d="M712 287L689.500 265v22l11.500 11.500L689.500 312M701 299h11.500"/><path d="M734 774l11 11-11 11.700M745 785h11M739.500 808.500l5.500-5.500 6 5.500z"/></g>
 <g stroke="#111" fill="none">
 <path d="M403 866.500H725M404 297.500H1227M424.500 623V833M424.500 332V540M438 581.500H721.500"/>
 ${ln(633.400,574,774,601.300)}${ln(582.500,834.300,722.600,862)}${ln(648.800,612.700,637.700,667.300)}${ln(622.300,749.300,611.200,805)}
 ${tri('425,298 431,330 419,330')}${tri('419,833 431,833 425.500,866')}
 ${tri('655,578.300 654.500,613.300 643.400,610.700')}${tri('605.500,804.300 616.600,806.300 604.700,838.300')}
 <path d="M1276.400 889V1009.300M1314.500 661V1080M745.500 888V1080M1047 987.500H1241.500M780 987.500H965M1066 1058.500H1279M780 1058.500H982"/>
 ${tri('1241.500,982.300 1241.500,993.300 1276.400,987.700')}${tri('1279,1052.700 1279,1063.700 1314.500,1058.200')}${tri('780,982.300 780,993.300 746,987.700')}${tri('780,1052.700 780,1063.700 746,1058.200')}
 ${ln(1415.500,780,1312,766)}${tri('1278.700,761.300 1314,760.300 1312.200,771.700')}${ln(1586.800,804,1698,820)}
 ${tri('763.600,774.300 796.900,781.300 793,792.300')}${tri('838.200,865 827.500,834 838.600,831.300')}
 <path d="M1123.500 705.300C1100 745 1080 790 1075.800 831.700"/>${tri('1069.300,831.700 1080.300,832.300 1073,865')}
 <path d="M1211 622.300C1230 607 1250 600 1270 594.500"/>${tri('1270.300,589.300 1272.400,600.700 1304.800,587.300')}
 ${ln(1177.700,220,1189.500,286)}${ln(1233,210,1245.400,275)}${tri('1181.900,242 1147.400,242.700 1149,253.700')}${ln(1142,249.300,1148.700,248.300)}
 ${tri('1237.400,231.300 1270.300,219.300 1272.400,230.700')}${ln(1272.400,224,1277.900,223.300)}
 ${ln(1146,316.700,1194,308.700)}${tri('1169.300,312.700 1176.400,346.300 1187.400,342.300')}${tri('1264.800,378.300 1231.500,372.300 1230.300,383.300')}
 </g>
 <path d="M746 866 L796 606.700 L874 456.700 L1194 308.700 L1250 297.700 L1313.600 639 C1296 685 1274 750 1274 815 L1276 866" fill="none" stroke="#ff0000" stroke-width="2.500"/><path d="M746 866H1276" stroke="#ff0000" stroke-width="2.800"/>
 ${dot(796,606.700)}${dot(874,456.700)}${dot(1194,308.700)}${dot(1250,297.700)}${dot(1313.600,639)}${dot(1276,866.700)}${dot(1698,820)}${dot(745,867)}
 <path d="M739 861l12 12M751 861l-12 12" stroke="#0a8a0a" stroke-width="2"/>
 <path d="M1008 856.500h16M1011 853.500l-3 3 3 3M1021 853.500l3 3-3 3" fill="none" stroke="#0a7a0a" stroke-width="2"/>
 <g fill="none" stroke="#0a8a1a" stroke-width="1.800"><rect x="1335" y="623" width="10" height="9"/><path d="M1337 623v-3a3 3 0 0 1 6 0v3"/></g><rect x="1338.500" y="626" width="3" height="3" fill="#0a8a1a"/>
 ${tx(426,582,'30')}${tx(462,582,'35')}${tx(631,709,'14')}${tx(1211,237,'3')}${tx(1209,369,'90 °')}${tx(828,823,'79 °')}${tx(1156,664,'79.33 °')}${tx(1501,792,'R22.371')}${tx(1006,988,'28')}${tx(1025,1058,'30')}
 <g stroke="#0000f0" fill="none" stroke-width="1"><path d="M279.500 964l8 9 8.500-9M287.500 973v8"/></g>
 <path d="M287.300 986.700L294 1002.700H291V1046H284V1002.700H281z" fill="#0000f0"/>
 <path d="M219.300 1054.300L236 1048V1051.500H279.300V1058H236V1060.500z" fill="#ee0000"/><path d="M236 1055H279.300V1058H236z" fill="#a80000"/>
 <path d="M202 1045.500h12l-12 12v5.500h12" stroke="#f02020" fill="none"/>
 <path d="M279 1046l17 17M296 1046l-17 17" stroke="#0f9f0f"/><circle cx="287.300" cy="1054.300" r="6.500" fill="#0c9a0c"/>
 </svg><div class="blk"></div>`}}
customElements.define('cad-canvas',CadCanvas);

class StatusBar extends HTMLElement{constructor(){super();this.attachShadow({mode:'open'}).innerHTML=`<style>:host{display:flex;height:19px;box-sizing:border-box;background:#f0f0f0;font:12px/12px ${FONT};font-feature-settings:"palt";color:#111;white-space:nowrap;padding-bottom:2px;position:relative;z-index:1}
 div{box-sizing:border-box;border-top:1px solid #a0a0a0;border-left:1px solid #a0a0a0;padding-left:4px;height:17px;line-height:11px}
 .m{flex:1;padding-left:5px;margin-left:2px;letter-spacing:-1px}.a{width:119px;margin-right:3px}.c{width:109px;font:12px/12px "Liberation Sans",sans-serif;color:#223}</style>
 <div class="m">ピックしてアイテムを選択。複数を選択するには、<span style="color:#1a4e9a">Shift</span>/クリック、またはクリック/ドラッグします。</div><div class="a">定義中</div><div class="c">(24.42, 34.64)</div>`}}
customElements.define('status-bar',StatusBar);

class CadApp extends HTMLElement{constructor(){super();this.attachShadow({mode:'open'}).innerHTML=`<style>:host{display:flex;flex-direction:column;width:1920px;height:1160px;position:relative;overflow:hidden;background:#fff}
 .main{display:flex;height:988px;min-height:0}</style><app-orb></app-orb><title-bar></title-bar><ribbon-tabs></ribbon-tabs><ribbon-bar></ribbon-bar><div class="main"><side-bar></side-bar><cad-canvas></cad-canvas></div><status-bar></status-bar>`}}
customElements.define('cad-app',CadApp);
</script>
</body></html>
